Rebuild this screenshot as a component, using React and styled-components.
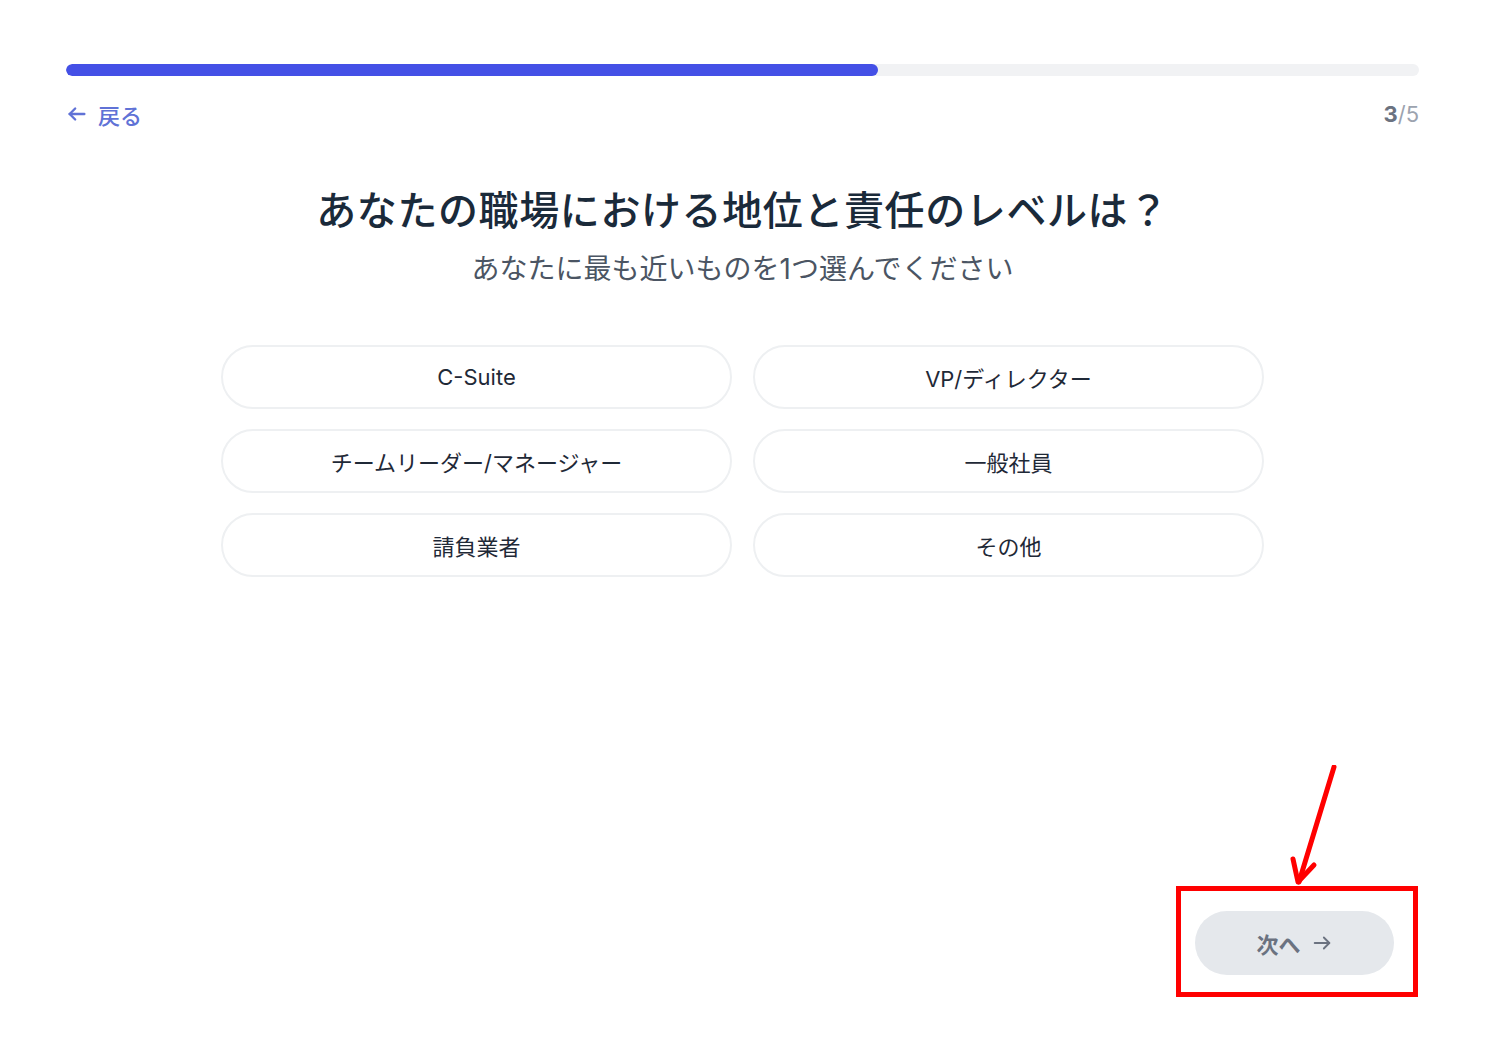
import styled, { createGlobalStyle } from 'styled-components';

const GlobalStyle = createGlobalStyle`
  * { box-sizing: border-box; }
  body {
    margin: 0;
    background: #ffffff;
    font-family: Inter, "Noto Sans CJK JP", sans-serif;
  }
`;

const options = [
  'C-Suite',
  'VP/ディレクター',
  'チームリーダー/マネージャー',
  '一般社員',
  '請負業者',
  'その他',
];

const App = () => {
  const step = 3;
  const total = 5;

  return (
    <Page>
      <GlobalStyle />
      <Track>
        <Fill style={{ width: `${(step / total) * 100}%` }} />
      </Track>

      <TopRow>
        <BackLink type="button">
          <svg width="22" height="22" viewBox="0 0 24 24" fill="none" stroke="currentColor" strokeWidth="2.6" strokeLinecap="round" strokeLinejoin="round">
            <path d="M20 12H4" />
            <path d="M10 18l-6-6 6-6" />
          </svg>
          戻る
        </BackLink>
        <Counter>
          <b>{step}</b>/{total}
        </Counter>
      </TopRow>

      <Heading>
        <Title>あなたの職場における地位と責任のレベルは？</Title>
        <Subtitle>あなたに最も近いものを1つ選んでください</Subtitle>
      </Heading>

      <OptionGrid>
        {options.map((o) => (
          <Option key={o} type="button">{o}</Option>
        ))}
      </OptionGrid>

      <Footer>
        <NextButton type="button" disabled>
          次へ
          <svg width="22" height="22" viewBox="0 0 24 24" fill="none" stroke="currentColor" strokeWidth="2" strokeLinecap="round" strokeLinejoin="round">
            <path d="M4 12h16" />
            <path d="M14 6l6 6-6 6" />
          </svg>
        </NextButton>
      </Footer>

      <Highlight />
      <Pointer width="60" height="130" viewBox="0 0 60 130">
        <path d="M48 2 L13 117" stroke="#ff0000" strokeWidth="5" strokeLinecap="round" fill="none" />
        <path d="M7 94 L12 117 L28 100" stroke="#ff0000" strokeWidth="5" strokeLinecap="round" strokeLinejoin="round" fill="none" />
      </Pointer>
    </Page>
  );
};

const Page = styled.div`
  position: relative;
  min-height: 100vh;
  display: flex;
  flex-direction: column;
  padding: 64px 71px 68px 66px;
`;

const Track = styled.div`
  height: 12px;
  border-radius: 6px;
  background: #f1f2f4;
  overflow: hidden;
`;

const Fill = styled.div`
  height: 100%;
  border-radius: 6px;
  background: #4450e6;
`;

const TopRow = styled.div`
  display: flex;
  justify-content: space-between;
  align-items: center;
  margin-top: 25px;
  height: 26px;
`;

const BackLink = styled.button`
  display: flex;
  align-items: center;
  gap: 10px;
  padding: 0;
  border: none;
  background: none;
  color: #6072d6;
  font-family: inherit;
  font-size: 22px;
  font-weight: 500;
  cursor: pointer;
`;

const Counter = styled.span`
  font-size: 22px;
  color: #9ca3af;
  b {
    color: #6b7280;
    font-weight: 700;
  }
`;

const Heading = styled.div`
  display: flex;
  flex-direction: column;
  align-items: center;
  margin-top: 58px;
`;

const Title = styled.h1`
  margin: 0;
  font-size: 40px;
  line-height: 52px;
  font-weight: 500;
  letter-spacing: 0.6px;
  color: #1a2a3a;
`;

const Subtitle = styled.p`
  margin: 14px 0 0;
  font-size: 28px;
  line-height: 36px;
  font-weight: 400;
  color: #4b5563;
`;

const OptionGrid = styled.div`
  display: grid;
  grid-template-columns: repeat(2, 511px);
  gap: 20px 21px;
  justify-content: center;
  margin-top: 58px;
`;

const Option = styled.button`
  height: 64px;
  border: 2px solid #eef0f2;
  border-radius: 32px;
  background: #ffffff;
  font-family: inherit;
  font-size: 22px;
  color: #1f2937;
  cursor: pointer;
`;

const Footer = styled.div`
  margin-top: auto;
  display: flex;
  justify-content: flex-end;
  padding-right: 25px;
`;

const NextButton = styled.button`
  width: 199px;
  height: 64px;
  border: none;
  border-radius: 32px;
  background: #e5e8ec;
  color: #6b7280;
  display: flex;
  align-items: center;
  justify-content: center;
  gap: 10px;
  font-family: inherit;
  font-size: 22px;
  font-weight: 600;
`;

const Highlight = styled.div`
  position: absolute;
  left: 1176px;
  top: 886px;
  width: 242px;
  height: 111px;
  border: 5px solid #ff0000;
`;

const Pointer = styled.svg`
  position: absolute;
  left: 1286px;
  top: 765px;
`;

export default App;
